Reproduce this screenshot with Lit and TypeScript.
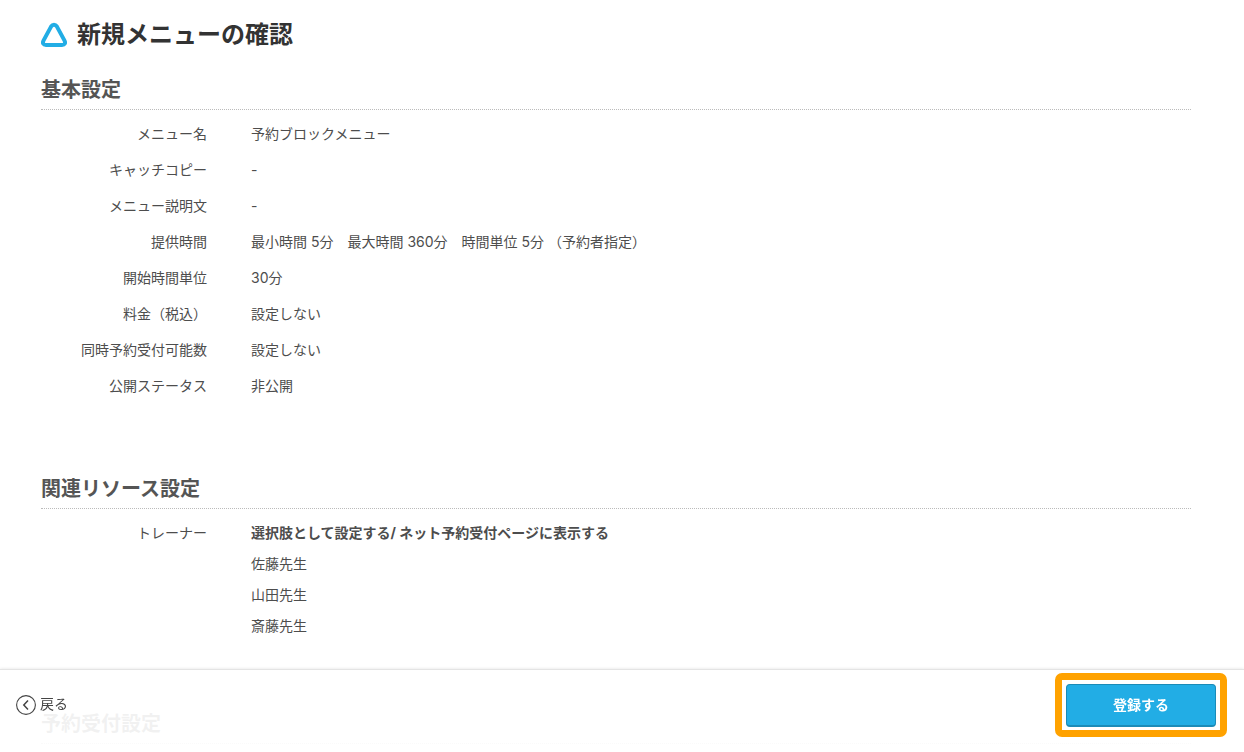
import { LitElement, html, css } from "lit";
import { customElement } from "lit/decorators.js";

interface Row {
  label: string;
  value: string;
}

const basics: Row[] = [
  { label: "メニュー名", value: "予約ブロックメニュー" },
  { label: "キャッチコピー", value: "-" },
  { label: "メニュー説明文", value: "-" },
  { label: "提供時間", value: "最小時間 5分　最大時間 360分　時間単位 5分 （予約者指定）" },
  { label: "開始時間単位", value: "30分" },
  { label: "料金（税込）", value: "設定しない" },
  { label: "同時予約受付可能数", value: "設定しない" },
  { label: "公開ステータス", value: "非公開" },
];

const trainers = ["佐藤先生", "山田先生", "斎藤先生"];

@customElement("app-root")
export class AppRoot extends LitElement {
  static styles = css`
    :host {
      display: block;
      font-family: Inter, "Noto Sans CJK JP", sans-serif;
      font-size: 14px;
      color: #4d4d4d;
      background: #fff;
    }
    .page {
      padding: 17px 53px 0 41px;
    }
    .title {
      display: flex;
      align-items: center;
      gap: 10px;
      margin: 0 0 21px;
      font-size: 24px;
      line-height: 36px;
      font-weight: 700;
      color: #333;
    }
    .logo {
      flex: none;
      display: block;
    }
    .section {
      margin-bottom: 69px;
    }
    .heading {
      margin: 0 0 6px;
      padding-bottom: 3px;
      border-bottom: 1px dotted #bbb;
      font-size: 20px;
      line-height: 32px;
      font-weight: 700;
      color: #555;
    }
    .rows {
      margin: 0;
    }
    .row {
      display: grid;
      grid-template-columns: 166px 1fr;
      column-gap: 44px;
      line-height: 36px;
    }
    .label {
      text-align: right;
    }
    .value {
      margin: 0;
    }
    .mode {
      margin: 0;
      font-weight: 700;
    }
    .names {
      display: grid;
      gap: 5px;
      margin: 0;
      padding: 0;
      list-style: none;
      line-height: 26px;
    }
    .last {
      margin-bottom: 0;
    }
    .footer {
      position: fixed;
      left: 0;
      right: 0;
      bottom: 0;
      display: flex;
      align-items: center;
      justify-content: space-between;
      padding: 3px 17px 15px 16px;
      border-top: 1px solid #e4e4e4;
      box-shadow: 0 0 3px rgba(0, 0, 0, 0.12);
      background: rgba(255, 255, 255, 0.92);
    }
    .back {
      display: flex;
      align-items: center;
      gap: 4px;
      line-height: 20px;
      color: #444;
      text-decoration: none;
    }
    .back-text {
      padding-bottom: 3px;
    }
    .focus {
      padding: 4px 4px 3px;
      border: 7px solid #ffa200;
      border-radius: 7px;
      background: #fff;
    }
    .submit {
      display: block;
      width: 150px;
      height: 43px;
      padding: 0 0 2px;
      border: 1px solid #1b8bb8;
      border-bottom-width: 2px;
      border-radius: 4px;
      background: #22ade5;
      color: #fff;
      font: inherit;
      font-weight: 700;
      cursor: pointer;
    }
  `;

  render() {
    return html`
      <main class="page">
        <h1 class="title">
          <svg class="logo" width="26" height="26" viewBox="0 0 26 26" aria-hidden="true">
            <path
              d="M10.2 4.4 2.6 18.4C1.2 21 2.2 23 5 23H21C23.8 23 24.8 21 23.4 18.4L15.8 4.4C14.4 2.2 11.6 2.2 10.2 4.4Z"
              fill="none"
              stroke="#22ade5"
              stroke-width="4"
              stroke-linejoin="round"
            />
          </svg>
          <span>新規メニューの確認</span>
        </h1>

        <section class="section">
          <h2 class="heading">基本設定</h2>
          <dl class="rows">
            ${basics.map(
              (r) => html`<div class="row">
                <dt class="label">${r.label}</dt>
                <dd class="value">${r.value}</dd>
              </div>`
            )}
          </dl>
        </section>

        <section class="section">
          <h2 class="heading">関連リソース設定</h2>
          <dl class="rows">
            <div class="row">
              <dt class="label">トレーナー</dt>
              <dd class="value">
                <p class="mode">選択肢として設定する/ ネット予約受付ページに表示する</p>
                <ul class="names">
                  ${trainers.map((t) => html`<li>${t}</li>`)}
                </ul>
              </dd>
            </div>
          </dl>
        </section>

        <section class="section last">
          <h2 class="heading last">予約受付設定</h2>
        </section>
      </main>

      <footer class="footer">
        <a class="back" href="#">
          <svg width="20" height="20" viewBox="0 0 20 20" fill="none" stroke="#444" aria-hidden="true">
            <circle cx="10" cy="10" r="9.4" stroke-width="1.1" />
            <path d="M12 5.6 7.8 10 12 14.4" stroke-width="1.5" />
          </svg>
          <span class="back-text">戻る</span>
        </a>
        <div class="focus">
          <button class="submit" type="button">登録する</button>
        </div>
      </footer>
    `;
  }
}
